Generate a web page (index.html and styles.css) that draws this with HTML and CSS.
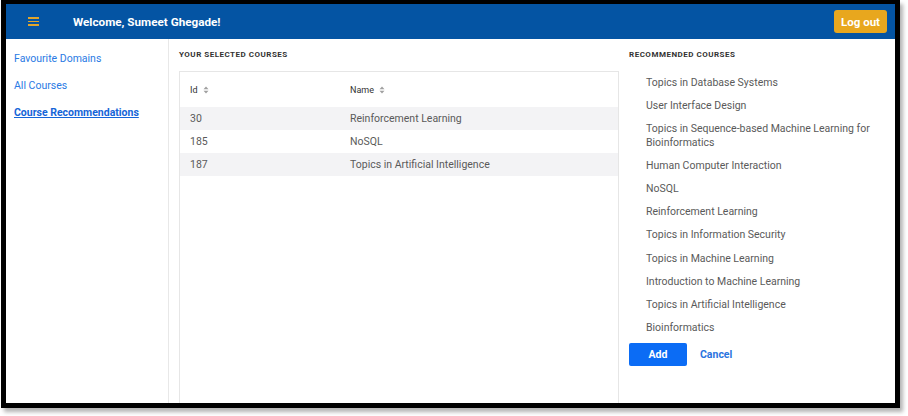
FILE: index.html
```html
<!DOCTYPE html>
<html>
<head>
<meta charset="utf-8">
<link rel="stylesheet" href="styles.css">
</head>
<body>
<div class="frame">
  <header class="topbar">
    <div class="burger"><span></span><span></span><span></span></div>
    <div class="welcome">Welcome, Sumeet Ghegade!</div>
    <button class="logout">Log out</button>
  </header>
  <div class="main">
    <nav class="sidebar">
      <a class="navlink">Favourite Domains</a>
      <a class="navlink">All Courses</a>
      <a class="navlink active">Course Recommendations</a>
    </nav>
    <section class="selected">
      <h2 class="sectitle">YOUR SELECTED COURSES</h2>
      <div class="tablewrap">
        <div class="row head">
          <div class="c-id">Id <svg class="sort" viewBox="0 0 6 8" width="6" height="8"><path d="M3 0.5 L5.5 3.2 H0.5 Z M3 7.5 L5.5 4.8 H0.5 Z" fill="#a0a0a0"/></svg></div>
          <div class="c-name">Name <svg class="sort" viewBox="0 0 6 8" width="6" height="8"><path d="M3 0.5 L5.5 3.2 H0.5 Z M3 7.5 L5.5 4.8 H0.5 Z" fill="#a0a0a0"/></svg></div>
        </div>
        <div class="row stripe"><div class="c-id">30</div><div class="c-name">Reinforcement Learning</div></div>
        <div class="row"><div class="c-id">185</div><div class="c-name">NoSQL</div></div>
        <div class="row stripe"><div class="c-id">187</div><div class="c-name">Topics in Artificial Intelligence</div></div>
      </div>
    </section>
    <section class="recommended">
      <h2 class="sectitle">RECOMMENDED COURSES</h2>
      <ul class="reclist">
        <li>Topics in Database Systems</li>
        <li>User Interface Design</li>
        <li>Topics in Sequence-based Machine Learning for Bioinformatics</li>
        <li>Human Computer Interaction</li>
        <li>NoSQL</li>
        <li>Reinforcement Learning</li>
        <li>Topics in Information Security</li>
        <li>Topics in Machine Learning</li>
        <li>Introduction to Machine Learning</li>
        <li>Topics in Artificial Intelligence</li>
        <li>Bioinformatics</li>
      </ul>
      <div class="actions">
        <button class="add">Add</button>
        <button class="cancel">Cancel</button>
      </div>
    </section>
  </div>
</div>
</body>
</html>
```

FILE: styles.css
```css
* { box-sizing: border-box; }
html, body { margin: 0; padding: 0; background: #fff; }
body {
  font-family: Roboto, "Liberation Sans", sans-serif;
  width: 908px;
  height: 416px;
  overflow: hidden;
}
.frame {
  margin: 0 0 0 1px;
  width: 899px;
  height: 408px;
  border: 5px solid #000;
  border-top-width: 4px;
  box-shadow: 3px 4px 4px rgba(0,0,0,0.3);
  display: flex;
  flex-direction: column;
  overflow: hidden;
  background: #fff;
}
.topbar {
  height: 35px;
  flex: none;
  background: #0454a3;
  display: flex;
  align-items: center;
  padding: 0 8px 0 22px;
}
.burger {
  width: 11px;
  display: flex;
  flex-direction: column;
  gap: 2px;
}
.burger span {
  display: block;
  height: 1.5px;
  background: #e0a52c;
}
.welcome {
  margin-left: 34px;
  color: #fff;
  font-weight: 700;
  font-size: 11.7px;
  flex: 1;
}
.logout {
  height: 23px;
  padding: 0 7px;
  border: 0;
  border-radius: 3px;
  background: #e8a71e;
  color: #fff;
  font-family: inherit;
  font-weight: 700;
  font-size: 11.5px;
}
.main {
  flex: 1;
  display: flex;
  min-height: 0;
}
.sidebar {
  width: 163px;
  flex: none;
  border-right: 1px solid #e8e8e8;
  padding: 13px 0 0 8px;
  display: flex;
  flex-direction: column;
  gap: 14px;
}
.navlink {
  font-size: 10.5px;
  line-height: 13px;
  color: #2a7ae4;
}
.navlink.active {
  font-weight: 700;
  color: #1565d8;
  text-decoration: underline;
}
.selected {
  width: 450px;
  flex: none;
  padding: 11px 0 0 10px;
  display: flex;
  flex-direction: column;
}
.sectitle {
  margin: 0;
  font-size: 8px;
  line-height: 10px;
  font-weight: 700;
  color: #333;
  letter-spacing: 0.5px;
}
.tablewrap {
  margin-top: 11px;
  flex: 1;
  border: 1px solid #e6e6e6;
  border-bottom: 0;
}
.row {
  display: flex;
  height: 23px;
  align-items: center;
  font-size: 10.5px;
  color: #5a5a5a;
}
.row.head {
  height: 35px;
  font-size: 9px;
  color: #333;
}
.row.stripe { background: #f3f3f5; }
.c-id { width: 170px; padding-left: 10px; }
.c-name { flex: 1; }
.sort { margin-left: 3px; vertical-align: middle; }
.recommended {
  flex: 1;
  padding: 11px 0 0 10px;
}
.reclist {
  list-style: none;
  margin: 11px 0 0 0;
  padding: 0 0 0 17px;
  width: 246px;
}
.reclist li {
  font-size: 10.5px;
  line-height: 13.2px;
  padding: 5px 0;
  color: #5a5a5a;
}
.actions {
  margin-top: 4px;
  display: flex;
  align-items: center;
}
.add {
  width: 58px;
  height: 23px;
  border: 0;
  border-radius: 2px;
  background: #0b6cf5;
  color: #fff;
  font-family: inherit;
  font-weight: 700;
  font-size: 10.5px;
}
.cancel {
  margin-left: 7px;
  border: 0;
  background: none;
  color: #2a74e0;
  font-family: inherit;
  font-weight: 700;
  font-size: 10.5px;
}
```
